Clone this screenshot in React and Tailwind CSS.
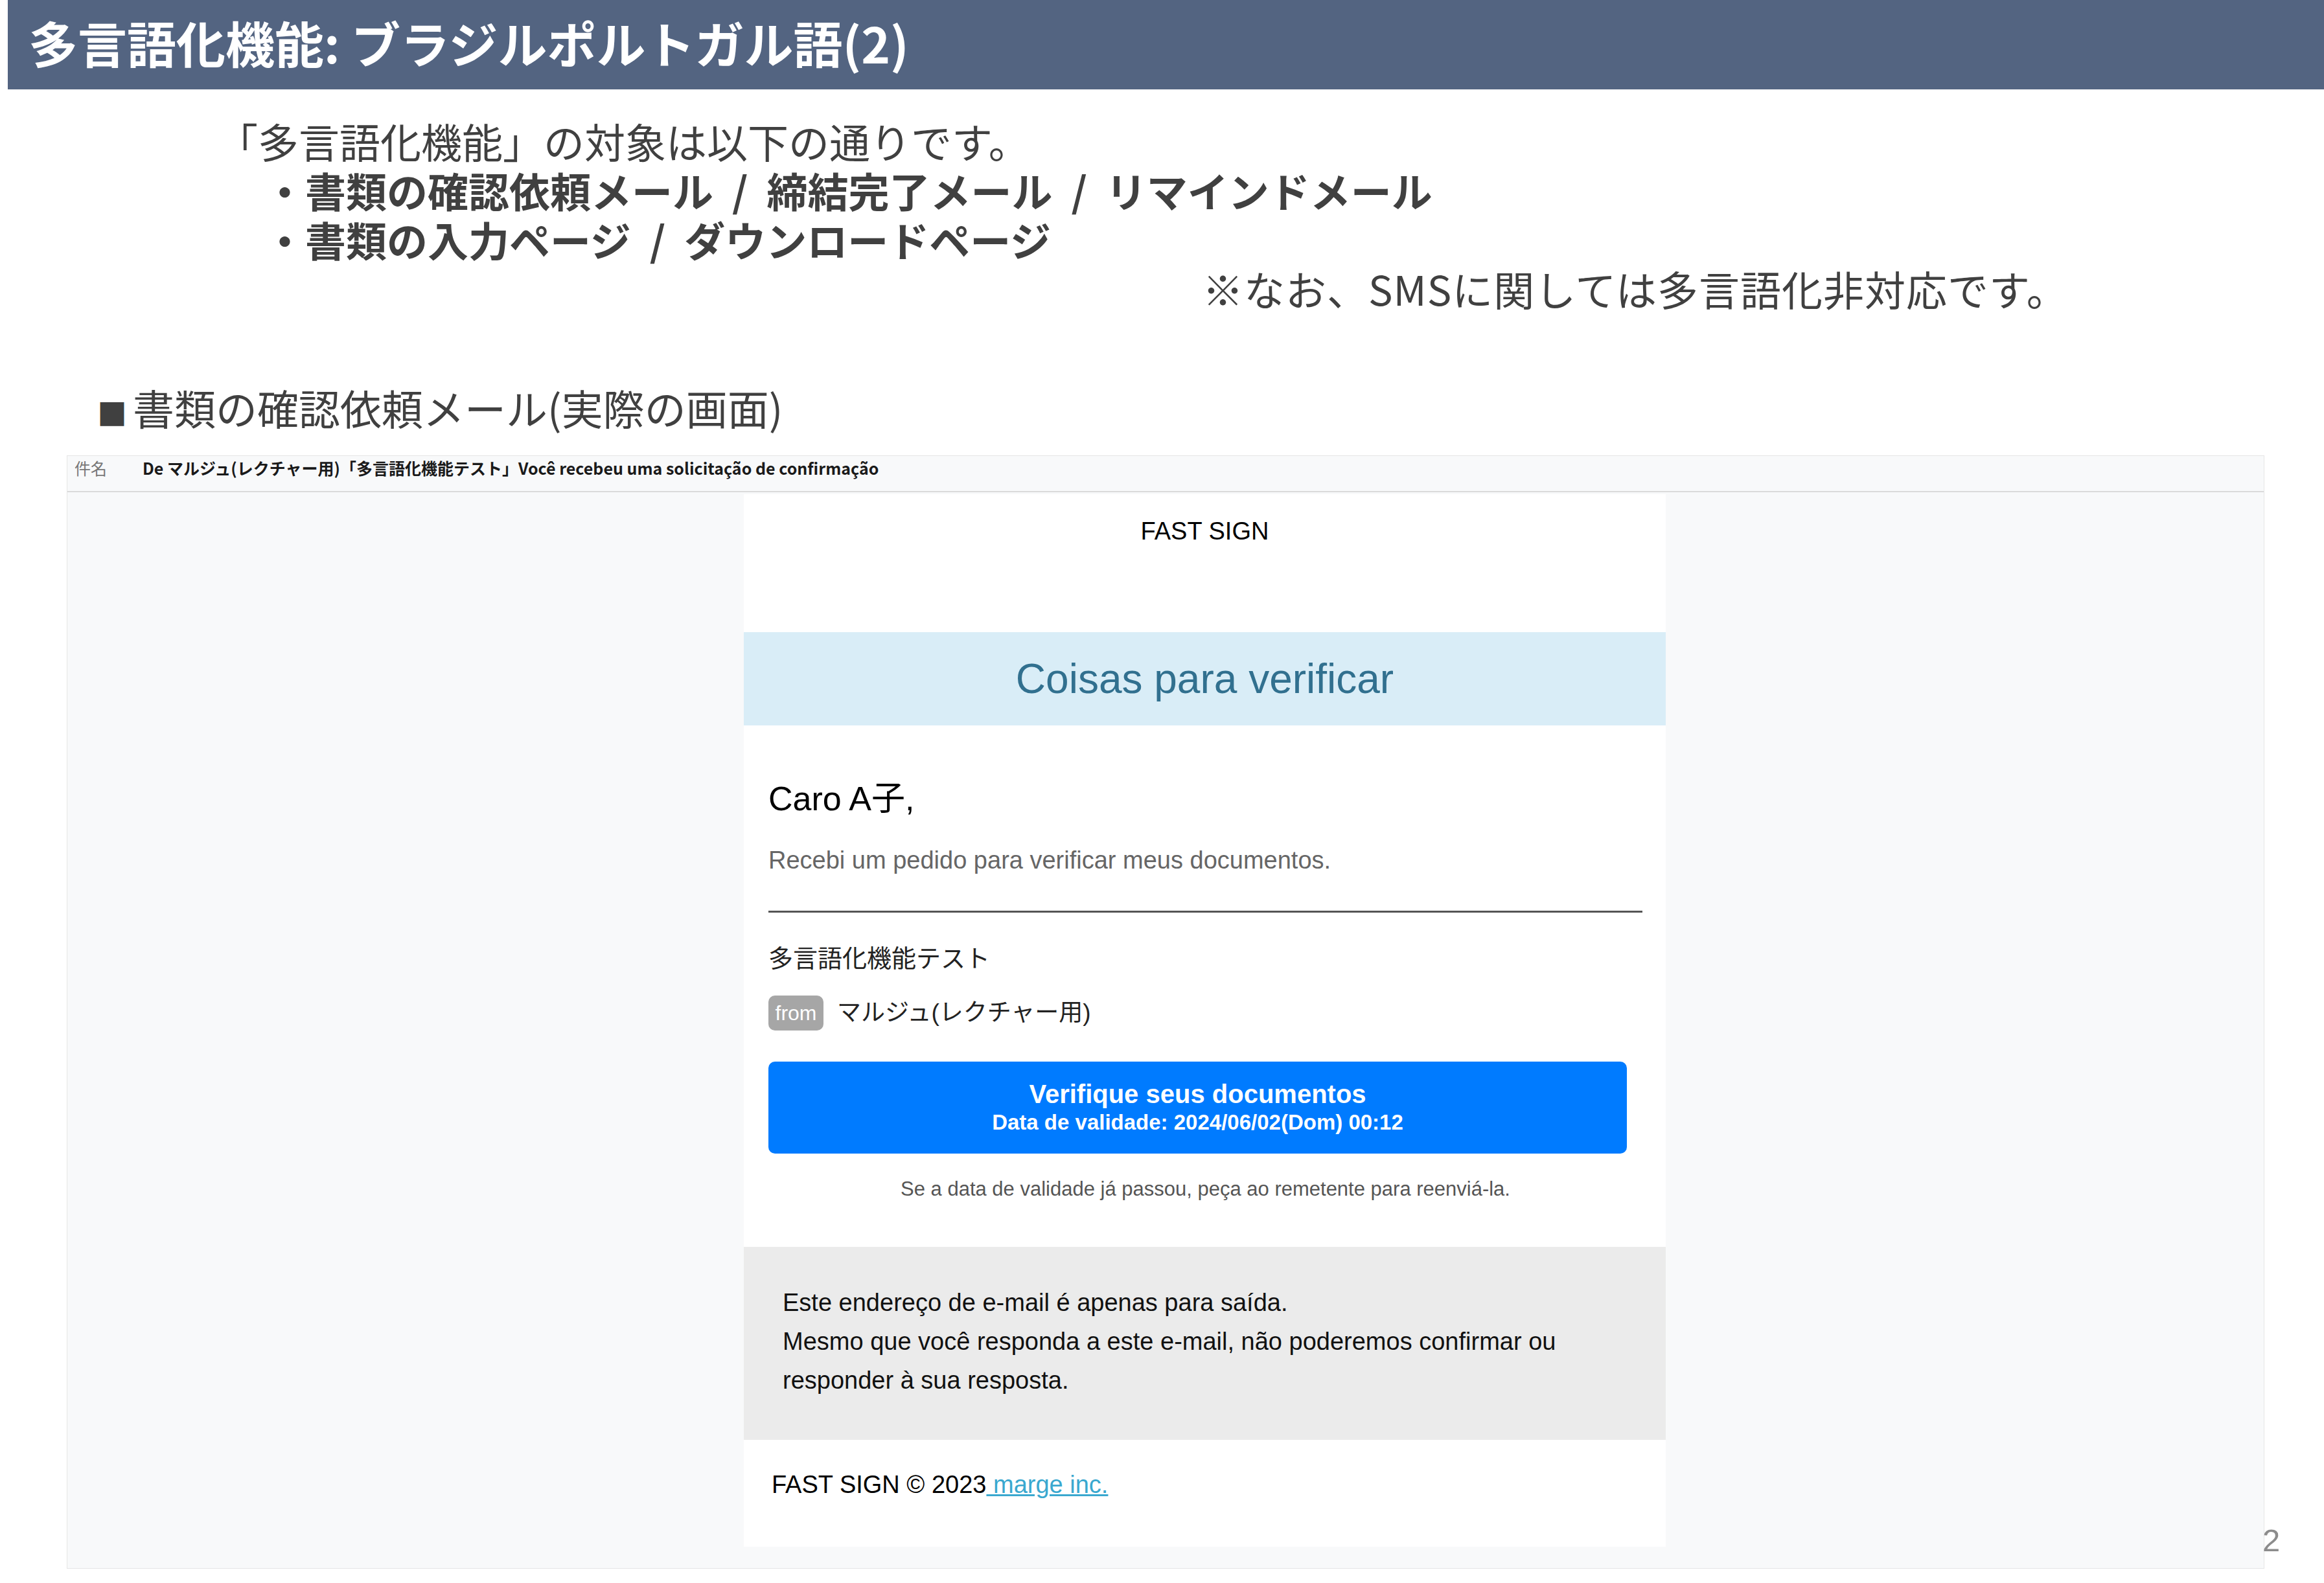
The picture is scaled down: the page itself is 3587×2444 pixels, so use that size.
import React from "react";

function Slash() {
  return <span className="mx-[29px] font-bold">/</span>;
}

export default function App() {
  return (
    <div className="relative w-[3587px] h-[2444px] overflow-hidden bg-white font-['Noto_Sans_CJK_JP',sans-serif]">
      {/* Slide title */}
      <header className="ml-[12px] h-[138px] bg-[#536481] flex items-center pl-[32px] pb-[8px]">
        <h1 className="text-[76px] leading-none font-bold text-white">
          多言語化機能: ブラジルポルトガル語(2)
        </h1>
      </header>

      {/* Intro text */}
      <div className="mt-[41px] text-[63px] leading-[76px] text-[#404040]">
        <p className="pl-[335px]">「多言語化機能」の対象は以下の通りです。</p>
        <p className="pl-[408px] font-bold">
          ・書類の確認依頼メール<Slash />締結完了メール<Slash />リマインドメール
        </p>
        <p className="pl-[408px] font-bold">
          ・書類の入力ページ<Slash />ダウンロードページ
        </p>
        <p className="pl-[1856px] tracking-[1px]">※なお、SMSに関しては多言語化非対応です。</p>
      </div>

      <p className="mt-[107px] pl-[150px] h-[76px] text-[64px] leading-[76px] text-[#404040]">
        <span className="text-[46px] leading-[0] mr-[9px]">■</span>書類の確認依頼メール(実際の画面)
      </p>

      {/* Mail screenshot frame */}
      <div className="mt-[37px] ml-[103px] w-[3392px] h-[1719px] bg-[#f8f9fa] border border-[#e6e6e6]">
        <div className="h-[56px] border-b-2 border-[#dadada] flex items-start pt-[2px] text-[25px] leading-[32px]">
          <span className="pl-[11px] w-[116px] shrink-0 text-[#777]">件名</span>
          <span className="font-semibold text-[#1a1a1a]">
            De マルジュ(レクチャー用)「多言語化機能テスト」Você recebeu uma solicitação de confirmação
          </span>
        </div>

        <div className="pt-[3px]">
          <div className="ml-[1044px] w-[1423px] bg-white font-['Liberation_Sans','Noto_Sans_CJK_JP',sans-serif]">
            <p className="pt-[35px] text-center text-[38px] leading-[44px] text-black">FAST SIGN</p>

            <div className="mt-[134px] h-[144px] bg-[#d9edf7] flex items-center justify-center">
              <h2 className="text-[64px] leading-none text-[#31708f]">Coisas para verificar</h2>
            </div>

            <div className="pl-[38px] pr-[36px]">
              <p className="mt-[83px] text-[52px] leading-[60px] text-black">Caro A子,</p>
              <p className="mt-[42px] text-[38px] leading-[46px] text-[#666]">
                Recebi um pedido para verificar meus documentos.
              </p>
              <hr className="mt-[55px] border-t-[3px] border-[#555]" />
              <p className="mt-[46px] text-[38px] leading-[50px] text-[#222]">多言語化機能テスト</p>
              <div className="mt-[32px] h-[54px] flex items-center">
                <span className="h-[54px] w-[85px] rounded-[10px] bg-[#a6a6a6] text-white text-[32px] flex items-center justify-center">
                  from
                </span>
                <span className="ml-[21px] text-[37px] text-[#222]">マルジュ(レクチャー用)</span>
              </div>

              <div className="mt-[48px] w-[1325px] h-[142px] rounded-[10px] bg-[#007bff] text-white font-bold flex flex-col items-center justify-center">
                <span className="text-[40px] leading-[46px]">Verifique seus documentos</span>
                <span className="text-[33px] leading-[42px]">Data de validade: 2024/06/02(Dom) 00:12</span>
              </div>

              <p className="mt-[35px] text-center text-[31px] leading-[40px] text-[#555]">
                Se a data de validade já passou, peça ao remetente para reenviá-la.
              </p>
            </div>

            <div className="mt-[69px] bg-[#ebebeb] pl-[60px] pt-[56px] pb-[62px] text-[38px] leading-[60px] text-[#111]">
              <p>Este endereço de e-mail é apenas para saída.</p>
              <p>Mesmo que você responda a este e-mail, não poderemos confirmar ou</p>
              <p>responder à sua resposta.</p>
            </div>

            <p className="mt-[47px] pl-[43px] pb-[74px] text-[38px] leading-[44px] text-black">
              FAST SIGN © 2023<a href="#" className="text-[#3aa8cf] underline"> marge inc.</a>
            </p>
          </div>
        </div>
      </div>

      {/* Page number */}
      <span className="absolute left-[3492px] top-[2354px] text-[49px] leading-none text-[#8c8c8c] font-['Liberation_Sans',sans-serif]">
        2
      </span>
    </div>
  );
}
